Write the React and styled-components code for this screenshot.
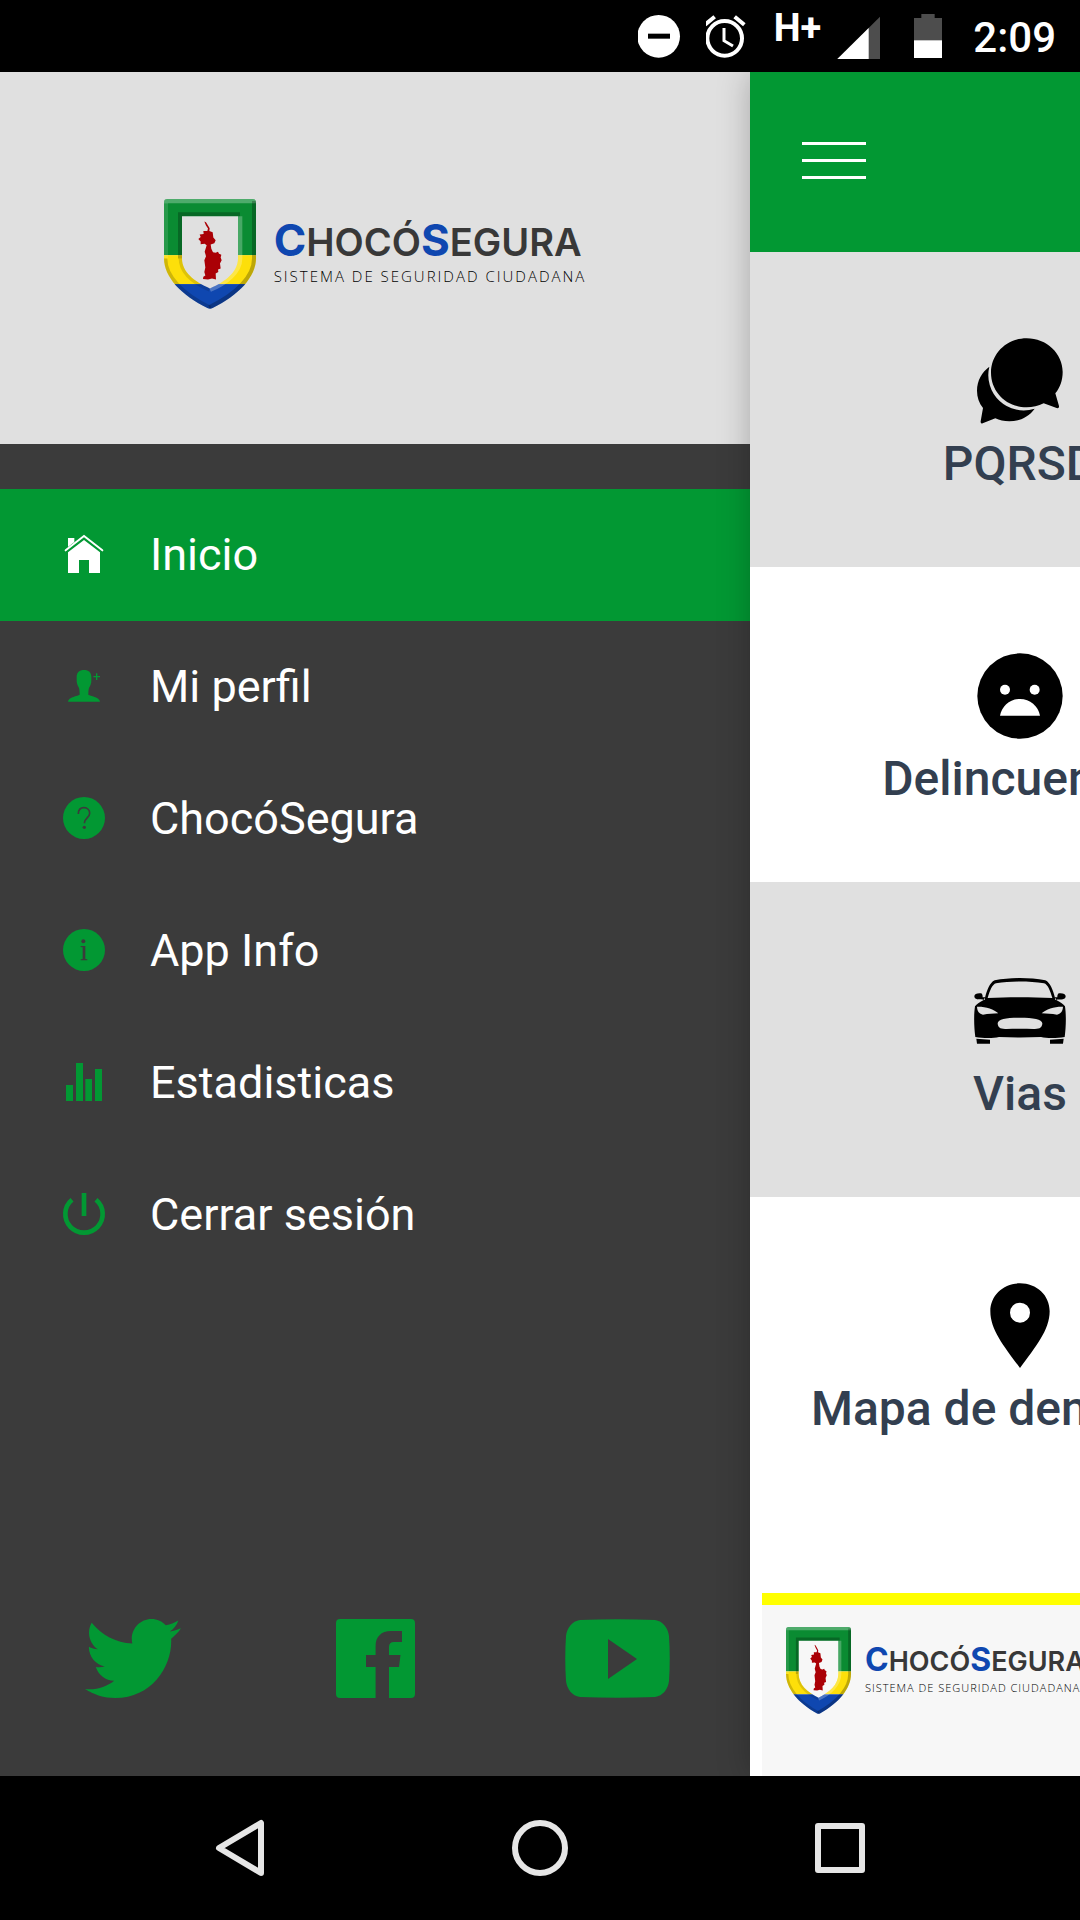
import React from "react";
import styled, { createGlobalStyle, ThemeProvider } from "styled-components";

const theme = {
  green: "#029833",
  dark: "#3b3b3b",
  grey: "#e0e0e0",
  ink: "#333f50",
};

const GlobalStyle = createGlobalStyle`
  *, *::before, *::after { box-sizing: border-box; }
  body { margin: 0; background: #000; font-family: Roboto, "Liberation Sans", sans-serif; }
  svg { display: block; flex: none; }
`;

const Screen = styled.div`
  display: flex;
  flex-direction: column;
  min-height: 100vh;
  background: #000;
`;

/* ---------- status bar ---------- */

const StatusBar = styled.header`
  display: flex;
  align-items: center;
  justify-content: flex-end;
  gap: 20px;
  height: 72px;
  padding-right: 24px;
  color: #fff;
`;

const Signal = styled.div`
  display: flex;
  align-items: center;
  gap: 16px;
`;

const NetworkType = styled.span`
  align-self: flex-start;
  font-size: 38px;
  font-weight: 700;
  line-height: 32px;
`;

const Clock = styled.time`
  padding-top: 4px;
  font-size: 42px;
  font-weight: 500;
  line-height: 48px;
`;

const StatusIcon = styled.svg.attrs({ width: 48, height: 48, "aria-hidden": true })``;

/* ---------- layout ---------- */

const Body = styled.div`
  display: flex;
  flex: 1;
  overflow: hidden;
`;

const Drawer = styled.aside`
  display: flex;
  flex: 0 0 calc(100% - 330px);
  flex-direction: column;
  background: ${({ theme }) => theme.dark};
`;

const DrawerHeader = styled.div`
  display: flex;
  align-items: center;
  justify-content: center;
  height: 372px;
  padding-bottom: 8px;
  background: ${({ theme }) => theme.grey};
`;

const Menu = styled.nav`
  display: flex;
  flex-direction: column;
  padding-top: 45px;
`;

const MenuItem = styled.a`
  display: flex;
  align-items: center;
  gap: 42px;
  height: 132px;
  padding: 0 60px 2px;
  background: ${({ $active, theme }) => ($active ? theme.green : "transparent")};
  color: #fff;
  font-size: 45px;
  text-decoration: none;
`;

const MenuIcon = styled.svg.attrs({ width: 48, height: 48, "aria-hidden": true })`
  color: ${({ $active, theme }) => ($active ? "#fff" : theme.green)};
`;

const SocialRow = styled.div`
  display: grid;
  grid-template-columns: repeat(3, 1fr);
  margin-top: auto;
  padding: 0 12px 78px;
`;

const SocialLink = styled.a`
  display: flex;
  align-items: center;
  justify-content: center;
  color: ${({ theme }) => theme.green};
`;

const Page = styled.main`
  display: flex;
  flex: 0 0 100%;
  flex-direction: column;
  background: #fff;
  box-shadow: 0 0 30px rgba(0, 0, 0, 0.25);
`;

const Toolbar = styled.div`
  display: flex;
  align-items: center;
  height: 180px;
  padding: 0 52px;
  background: ${({ theme }) => theme.green};
`;

const PlainButton = styled.button`
  display: flex;
  align-items: center;
  justify-content: center;
  padding: 0;
  border: 0;
  background: none;
  color: inherit;
  font: inherit;
`;

const ToggleButton = styled(PlainButton)`
  color: #fff;
`;

const Tiles = styled.div`
  display: flex;
  flex-direction: column;
`;

const TileRow = styled.div`
  display: grid;
  grid-template-columns: 1fr 1fr;
  background: ${({ $shaded, theme }) => ($shaded ? theme.grey : "#fff")};
`;

const Tile = styled(PlainButton)`
  flex-direction: column;
  padding: 78px 0 71px;
  color: ${({ theme }) => theme.ink};
  font-size: 48px;
  font-weight: 500;
  line-height: 64px;
  white-space: nowrap;
`;

const TileIcon = styled.svg.attrs({ width: 102, height: 102, "aria-hidden": true })`
  color: #000;
`;

const Banner = styled.footer`
  height: 183px;
  margin: auto 12px 0;
  padding: 22px 24px;
  border-top: 12px solid #ff0;
  background: #f7f7f7;
`;

const NavBar = styled.nav`
  display: grid;
  grid-template-columns: repeat(3, 1fr);
  height: 144px;
  padding: 0 90px;
  color: #e6e6e6;
`;

/* ---------- brand ---------- */

const Brand = styled.div`
  display: flex;
  align-items: center;
  gap: ${({ $small }) => ($small ? 14 : 18)}px;
  white-space: nowrap;
`;

const Shield = styled.svg`
  width: ${({ $small }) => ($small ? 65 : 92)}px;
  height: ${({ $small }) => ($small ? 87 : 110)}px;
`;

const BrandText = styled.div`
  display: flex;
  flex-direction: column;
  gap: 2px;
  padding-bottom: ${({ $small }) => ($small ? 2 : 4)}px;
`;

const Wordmark = styled.div`
  color: #383838;
  font-family: Inter, "Liberation Sans", sans-serif;
  font-size: ${({ $small }) => ($small ? 27 : 38)}px;
  font-weight: 600;
  line-height: ${({ $small }) => ($small ? 32 : 44)}px;
`;

const Initial = styled.span`
  color: #0f47b0;
  font-size: ${({ $small }) => ($small ? 32 : 44)}px;
  font-weight: 700;
`;

const Tagline = styled.div`
  color: #000;
  font-family: "Open Sans", "Noto Sans", sans-serif;
  font-size: ${({ $small }) => ($small ? 11 : 15)}px;
  font-weight: 300;
  letter-spacing: ${({ $small }) => ($small ? 1 : 2)}px;
  line-height: ${({ $small }) => ($small ? 16 : 20)}px;
`;

const OUTER =
  "M76 56H332Q342 56 342 66V235C342 290 290 346 212 384Q204 389 196 384C118 346 66 290 66 235V66Q66 56 76 56Z";
const INNER = "M120 108H288V235C288 275 252 304 204 325C156 304 120 275 120 235Z";

function Logo({ id, small }) {
  const clip = `shield-${id}`;
  return (
    <Brand $small={small}>
      <Shield $small={small} viewBox="66 56 276 331" preserveAspectRatio="none" aria-hidden="true">
        <clipPath id={clip}>
          <path d={OUTER + INNER} clipRule="evenodd" />
        </clipPath>
        <g clipPath={`url(#${clip})`} fill="none">
          <rect x="66" y="56" width="276" height="169" fill="#0a8b32" />
          <rect x="66" y="225" width="276" height="87" fill="#fddf0a" />
          <rect x="66" y="312" width="276" height="80" fill="#0f47b0" />
          <path d="M66 62H342" stroke="#fff" strokeOpacity=".28" strokeWidth="13" />
          <path d="M72 68V235" stroke="#fff" strokeOpacity=".12" strokeWidth="12" />
          <path d="M342 62V235C342 290 290 346 204 387" stroke="#000" strokeOpacity=".25" strokeWidth="24" />
          <path d="M204 387C118 346 66 290 66 235" stroke="#000" strokeOpacity=".18" strokeWidth="20" />
          <path d="M114 235V102H294" stroke="#000" strokeOpacity=".25" strokeWidth="12" />
          <path d="M120 235C120 275 156 304 204 325" stroke="#000" strokeOpacity=".12" strokeWidth="20" />
          <path d="M294 108V235C294 275 252 309 204 329" stroke="#fff" strokeOpacity=".25" strokeWidth="14" />
        </g>
        <path
          fill="#aa0006"
          d="M187 124L192 126L203 144L202 152L212 156L214 172L221 180L217 189L206 193L208 206L213 216L221 218L228 215L231 221L238 224L236 232L239 240L234 250L236 265L228 268L229 276L221 280L222 298L210 295L198 298L183 297L184 290L190 286L187 276L190 262L187 240L192 228L188 215L194 195L188 191L176 192L176 184L169 176L176 170L173 163L185 161L184 152L196 152L198 145L192 136Z"
        />
      </Shield>
      <BrandText $small={small}>
        <Wordmark $small={small}>
          <Initial $small={small}>C</Initial>HOCÓ<Initial $small={small}>S</Initial>EGURA
        </Wordmark>
        <Tagline $small={small}>SISTEMA DE SEGURIDAD CIUDADANA</Tagline>
      </BrandText>
    </Brand>
  );
}

/* ---------- data ---------- */

const menu = [
  {
    label: "Inicio",
    active: true,
    viewBox: "180 150 144 144",
    art: (
      <>
        <path
          fill="currentColor"
          d="M204 279V217L252 180L300 217V279H267V240H237V279ZM204 174H223V186L204 201Z"
        />
        <path d="M197 211L252 168L307 211" fill="none" stroke="currentColor" strokeWidth="6" strokeLinecap="round" />
      </>
    ),
  },
  {
    label: "Mi perfil",
    viewBox: "180 546 144 144",
    art: (
      <path
        fill="currentColor"
        d="M252 570c-14 0-22 8-22 20c0 4 0 8 0 12c0 8 3 14 6 20c2 5 3 10 3 22c-6 5-33 5-35 21h96c-2-16-29-16-35-21c0-12 1-17 3-22c3-6 6-12 6-20c0-4 0-8 0-12c0-12-8-20-22-20zM288 580h4v8h8v4h-8v8h-4v-8h-8v-4h8z"
      />
    ),
  },
  {
    label: "ChocóSegura",
    viewBox: "180 942 144 144",
    art: (
      <>
        <circle cx="252" cy="1014" r="63" fill="currentColor" />
        <path
          d="M235 1002c0-12 7-19 17-19s17 7 17 17c0 14-16 14-16 30"
          fill="none"
          stroke="#3b3b3b"
          strokeWidth="5"
        />
        <circle cx="253" cy="1042" r="5" fill="#3b3b3b" />
      </>
    ),
  },
  {
    label: "App Info",
    viewBox: "180 138 144 144",
    art: (
      <>
        <circle cx="252" cy="210" r="63" fill="currentColor" />
        <circle cx="250" cy="184" r="6" fill="#3b3b3b" />
        <path fill="#3b3b3b" d="M242 198h14v39l6 1v3h-20v-3l6-1v-35l-6-1z" />
      </>
    ),
  },
  {
    label: "Estadisticas",
    viewBox: "180 534 144 144",
    art: <path fill="currentColor" d="M198 615h21v48h-21zM228 549h21v114h-21zM256 597h20v66h-20zM285 567h21v96h-21z" />,
  },
  {
    label: "Cerrar sesión",
    viewBox: "180 930 144 144",
    art: (
      <path
        d="M216 959A56 56 0 1 0 288 959M252 939V1008"
        fill="none"
        stroke="currentColor"
        strokeWidth="14"
      />
    ),
  },
];

const tiles = [
  {
    label: "PQRSD",
    viewBox: "687 89 306 306",
    art: (
      <path d="M860 114C920 114 968 160 968 215C968 240 960 262 946 279L957 317Q958 325 950 323L911 309C895 317 878 321 860 321C800 321 753 275 753 217C753 160 800 114 860 114ZM748 199A106 106 0 0 0 884 325C866 350 838 363 808 363C792 363 778 359 766 354L728 369Q721 370 722 363L729 323C717 308 711 290 711 271C711 240 726 215 748 199Z" />
    ),
  },
  {
    label: "Delincuencia",
    viewBox: "687 73 306 306",
    art: (
      <>
        <circle cx="840" cy="226" r="128" />
        <g fill="#fff">
          <circle cx="795" cy="207" r="15" />
          <circle cx="884" cy="207" r="15" />
          <path d="M780 285C785 257 810 235 840 235S895 257 900 285Z" />
        </g>
      </>
    ),
  },
  {
    label: "Vias",
    viewBox: "687 59 306 306",
    art: (
      <path
        fillRule="evenodd"
        d="M735 172C741 150 749 127 764 120C812 111 868 111 916 120C931 127 939 150 945 172L950 180C962 186 970 192 975 198C979 225 978 262 974 290C950 294 920 294 903 290C860 292 820 292 777 290C760 294 730 294 706 290C702 262 701 225 705 198C710 192 718 186 730 180ZM743 173C750 150 757 132 768 129C815 122 865 122 912 129C923 132 930 150 937 173C870 170 810 170 743 173ZM711 199C735 198 762 206 775 219C760 221 745 220 729 223C718 220 712 214 711 199ZM969 199C945 198 918 206 905 219C920 221 935 220 951 223C962 220 968 214 969 199ZM773 249C774 236 800 232 840 232S906 236 907 249C906 262 900 267 880 266C855 265 825 265 800 266C780 267 774 262 773 249ZM703 168C703 160 712 158 724 159C728 163 728 168 728 171H735V178C715 178 703 178 703 168ZM977 168C977 160 968 158 956 159C952 163 952 168 952 171H945V178C965 178 977 178 977 168ZM709 295L750 298V310H711ZM971 295L930 298V310H969Z"
      />
    ),
  },
  {
    label: "Mapa de denuncias",
    viewBox: "687 44 306 306",
    art: (
      <path
        fillRule="evenodd"
        d="M840 69C890 69 929 105 929 153C929 210 885 262 840 323C795 262 751 210 751 153C751 105 790 69 840 69ZM840 127a30 30 0 1 0 0 60a30 30 0 1 0 0-60Z"
      />
    ),
  },
];

const socials = [
  {
    label: "Twitter",
    width: 96,
    viewBox: "20 64 472 384",
    d: "M492 109.5c-17.4 7.7-36 12.9-55.6 15.3 20-12 35.4-31 42.6-53.6-18.7 11.1-39.4 19.2-61.5 23.5C399.8 75.8 374.6 64 346.8 64c-53.5 0-96.8 43.4-96.8 96.9 0 7.6.8 15 2.5 22.1-80.5-4-151.9-42.6-199.6-101.3-8.3 14.3-13.1 31-13.1 48.7 0 33.6 17.2 63.3 43.2 80.7C67 210.7 52 206.3 39 199v1.2c0 47 33.4 86.1 77.7 95-8.1 2.2-16.7 3.4-25.5 3.4-6.2 0-12.3-.6-18.2-1.8 12.3 38.5 48.1 66.5 90.5 67.3-33.1 26-74.9 41.5-120.3 41.5-7.8 0-15.5-.5-23.1-1.4C62.8 432 113.7 448 168.3 448 346.6 448 444 300.3 444 172.2c0-4.2-.1-8.4-.3-12.5C462.6 146 479 129 492 109.5z",
  },
  {
    label: "Facebook",
    width: 79,
    viewBox: "0 0 79 79",
    d: "M4 0H75a4 4 0 0 1 4 4V75a4 4 0 0 1-4 4H53V48H63L64.5 36H53V28Q53 23 58 23H66V12H55C45 12 39.6 18 39.6 27V36H30V48H39.6V79H4a4 4 0 0 1-4-4V4a4 4 0 0 1 4-4z",
  },
  {
    label: "YouTube",
    width: 105,
    viewBox: "0 0 105 79",
    d: "M15 1C40 0 65 0 90 1C98 2 103 9 104 17C105 32 105 47 104 62C103 70 98 77 90 78C65 79 40 79 15 78C7 77 2 70 1 62C0 47 0 32 1 17C2 9 7 2 15 1zM43 20V60L72 40z",
  },
];

export default function App() {
  return (
    <ThemeProvider theme={theme}>
      <GlobalStyle />
      <Screen>
        <StatusBar>
          <StatusIcon viewBox="54 36 144 144">
            <circle cx="116" cy="109" r="64" fill="#fff" />
            <rect x="84" y="101" width="66" height="15" fill="#000" />
          </StatusIcon>
          <StatusIcon viewBox="255 36 144 144">
            <g fill="none" stroke="#fff">
              <circle cx="311" cy="115" r="52" strokeWidth="12" />
              <path d="M309 84V122L336 138" strokeWidth="9" />
              <path d="M252 74L281 50M341 50L370 74" strokeWidth="12" />
            </g>
          </StatusIcon>
          <Signal>
            <NetworkType>H+</NetworkType>
            <StatusIcon viewBox="651 36 144 144">
              <path d="M780 50V177H652Z" fill="#4d4d4d" />
              <path d="M746 84V177H652Z" fill="#fff" />
            </StatusIcon>
          </Signal>
          <StatusIcon viewBox="855 36 144 144">
            <path d="M904 42H944V54H966V174H882V54H904Z" fill="#4d4d4d" />
            <rect x="882" y="121" width="84" height="53" fill="#fff" />
          </StatusIcon>
          <Clock>2:09</Clock>
        </StatusBar>

        <Body>
          <Drawer>
            <DrawerHeader>
              <Logo id="drawer" />
            </DrawerHeader>
            <Menu>
              {menu.map(({ label, active, viewBox, art }) => (
                <MenuItem key={label} href="#" $active={active}>
                  <MenuIcon viewBox={viewBox} $active={active}>
                    {art}
                  </MenuIcon>
                  {label}
                </MenuItem>
              ))}
            </Menu>
            <SocialRow>
              {socials.map(({ label, width, viewBox, d }) => (
                <SocialLink key={label} href="#" aria-label={label}>
                  <svg width={width} height="79" viewBox={viewBox} preserveAspectRatio="none" aria-hidden="true">
                    <path d={d} fill="currentColor" fillRule="evenodd" />
                  </svg>
                </SocialLink>
              ))}
            </SocialRow>
          </Drawer>

          <Page>
            <Toolbar>
              <ToggleButton type="button" aria-label="Menú">
                <svg width="64" height="40" viewBox="0 0 64 40" aria-hidden="true">
                  <path d="M0 0H64V3H0ZM0 17H64V20H0ZM0 34H64V37H0Z" fill="currentColor" />
                </svg>
              </ToggleButton>
            </Toolbar>
            <Tiles>
              {tiles.map(({ label, viewBox, art }, index) => (
                <TileRow key={label} $shaded={index % 2 === 0}>
                  <Tile type="button">
                    <TileIcon viewBox={viewBox}>{art}</TileIcon>
                    {label}
                  </Tile>
                </TileRow>
              ))}
            </Tiles>
            <Banner>
              <Logo id="banner" small />
            </Banner>
          </Page>
        </Body>

        <NavBar>
          <PlainButton type="button" aria-label="Atrás">
            <svg width="64" height="64" viewBox="0 0 64 64" fill="none" stroke="currentColor" strokeWidth="6" strokeLinejoin="round">
              <path d="M11 32L53 7V57Z" />
            </svg>
          </PlainButton>
          <PlainButton type="button" aria-label="Inicio">
            <svg width="64" height="64" viewBox="0 0 64 64" fill="none" stroke="currentColor" strokeWidth="6">
              <circle cx="32" cy="32" r="25" />
            </svg>
          </PlainButton>
          <PlainButton type="button" aria-label="Recientes">
            <svg width="64" height="64" viewBox="0 0 64 64" fill="none" stroke="currentColor" strokeWidth="6" strokeLinejoin="round">
              <rect x="10" y="10" width="44" height="44" />
            </svg>
          </PlainButton>
        </NavBar>
      </Screen>
    </ThemeProvider>
  );
}
